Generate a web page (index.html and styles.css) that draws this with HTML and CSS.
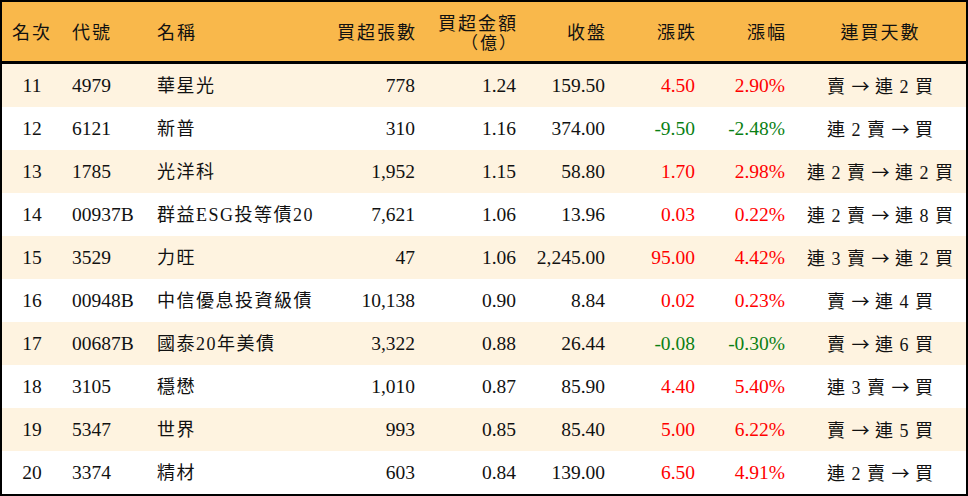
FILE: index.html
```html
<!DOCTYPE html>
<html lang="zh-Hant">
<head>
<meta charset="utf-8">
<link rel="stylesheet" href="styles.css">
</head>
<body>
<div class="frame">
<table class="rank">
  <colgroup>
    <col class="c-rank"><col class="c-code"><col class="c-name"><col class="c-lots"><col class="c-amt"><col class="c-close"><col class="c-chg"><col class="c-pct"><col class="c-days">
  </colgroup>
  <thead>
    <tr>
      <th class="center">名次</th>
      <th class="left code">代號</th>
      <th class="left name">名稱</th>
      <th class="right">買超張數</th>
      <th class="right two"><span class="l1">買超金額</span><span class="l2">（億）</span></th>
      <th class="right">收盤</th>
      <th class="right">漲跌</th>
      <th class="right">漲幅</th>
      <th class="center">連買天數</th>
    </tr>
  </thead>
  <tbody>
    <tr class="alt"><td class="center">11</td><td class="left code">4979</td><td class="left name">華星光</td><td class="right">778</td><td class="right">1.24</td><td class="right">159.50</td><td class="right up">4.50</td><td class="right up">2.90%</td><td class="center days">賣 <span class="arr">→</span> 連 2 買</td></tr>
    <tr><td class="center">12</td><td class="left code">6121</td><td class="left name">新普</td><td class="right">310</td><td class="right">1.16</td><td class="right">374.00</td><td class="right down">-9.50</td><td class="right down">-2.48%</td><td class="center days">連 2 賣 <span class="arr">→</span> 買</td></tr>
    <tr class="alt"><td class="center">13</td><td class="left code">1785</td><td class="left name">光洋科</td><td class="right">1,952</td><td class="right">1.15</td><td class="right">58.80</td><td class="right up">1.70</td><td class="right up">2.98%</td><td class="center days">連 2 賣 <span class="arr">→</span> 連 2 買</td></tr>
    <tr><td class="center">14</td><td class="left code">00937B</td><td class="left name">群益ESG投等債20</td><td class="right">7,621</td><td class="right">1.06</td><td class="right">13.96</td><td class="right up">0.03</td><td class="right up">0.22%</td><td class="center days">連 2 賣 <span class="arr">→</span> 連 8 買</td></tr>
    <tr class="alt"><td class="center">15</td><td class="left code">3529</td><td class="left name">力旺</td><td class="right">47</td><td class="right">1.06</td><td class="right">2,245.00</td><td class="right up">95.00</td><td class="right up">4.42%</td><td class="center days">連 3 賣 <span class="arr">→</span> 連 2 買</td></tr>
    <tr><td class="center">16</td><td class="left code">00948B</td><td class="left name">中信優息投資級債</td><td class="right">10,138</td><td class="right">0.90</td><td class="right">8.84</td><td class="right up">0.02</td><td class="right up">0.23%</td><td class="center days">賣 <span class="arr">→</span> 連 4 買</td></tr>
    <tr class="alt"><td class="center">17</td><td class="left code">00687B</td><td class="left name">國泰20年美債</td><td class="right">3,322</td><td class="right">0.88</td><td class="right">26.44</td><td class="right down">-0.08</td><td class="right down">-0.30%</td><td class="center days">賣 <span class="arr">→</span> 連 6 買</td></tr>
    <tr><td class="center">18</td><td class="left code">3105</td><td class="left name">穩懋</td><td class="right">1,010</td><td class="right">0.87</td><td class="right">85.90</td><td class="right up">4.40</td><td class="right up">5.40%</td><td class="center days">連 3 賣 <span class="arr">→</span> 買</td></tr>
    <tr class="alt"><td class="center">19</td><td class="left code">5347</td><td class="left name">世界</td><td class="right">993</td><td class="right">0.85</td><td class="right">85.40</td><td class="right up">5.00</td><td class="right up">6.22%</td><td class="center days">賣 <span class="arr">→</span> 連 5 買</td></tr>
    <tr><td class="center">20</td><td class="left code">3374</td><td class="left name">精材</td><td class="right">603</td><td class="right">0.84</td><td class="right">139.00</td><td class="right up">6.50</td><td class="right up">4.91%</td><td class="center days">連 2 賣 <span class="arr">→</span> 買</td></tr>
  </tbody>
</table>
</div>
</body>
</html>
```
FILE: styles.css
```css
html, body {
  margin: 0;
  padding: 0;
  background: #ffffff;
}
.frame {
  width: 968px;
  height: 496px;
  box-sizing: border-box;
  border: 2px solid #000;
  overflow: hidden;
}
.rank {
  width: 964px;
  border-collapse: collapse;
  border-spacing: 0;
  table-layout: fixed;
  font-family: "Liberation Serif", "Noto Sans CJK TC", serif;
  font-size: 19.5px;
  color: #111;
}
.c-rank { width: 60px; }
.c-code { width: 88px; }
.c-name { width: 175px; }
.c-lots { width: 100px; }
.c-amt { width: 101px; }
.c-close { width: 89px; }
.c-chg { width: 90px; }
.c-pct { width: 90px; }
.c-days { width: 171px; }

.rank th {
  height: 59px;
  background: #f9b84b;
  border-bottom: 3px solid #000;
  font-weight: normal;
  font-family: "Noto Sans CJK TC", sans-serif;
  font-size: 18px;
  letter-spacing: 2px;
  line-height: 21px;
  padding: 0 10px;
  white-space: nowrap;
}
.rank th.two .l1,
.rank th.two .l2 {
  display: block;
  height: 20px;
  line-height: 20px;
}
.rank th.two .l1 { font-size: 18px; }
.rank th.two .l2 { font-size: 17px; }
.rank td {
  height: 43px;
  padding: 0 10px;
  white-space: nowrap;
  line-height: 22px;
}
.rank tr.alt td { background: #fef3e0; }
.rank td.name, .rank th.name { padding-left: 7px; }
.rank td.code, .rank th.code { padding-left: 10px; }
.left { text-align: left; }
.right { text-align: right; }
.rank th.right { padding-right: 8px; letter-spacing: 2px; }
.center { text-align: center; }
.rank td.name { font-size: 18px; letter-spacing: 1.5px; }
.rank td.days { font-size: 18px; letter-spacing: 1px; }
.arr {
  font-family: "Noto Sans CJK TC", sans-serif;
  font-size: 18px;
  letter-spacing: 0;
}
.up { color: #ff0000; }
.rank td.down { color: #0a7f14; }
```
